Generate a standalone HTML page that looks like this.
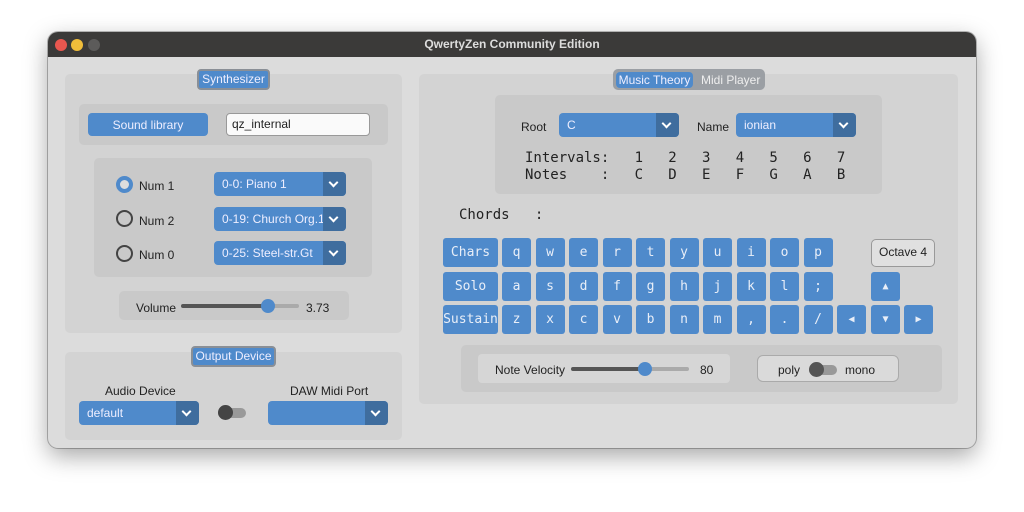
<!DOCTYPE html>
<html><head><style>
*{box-sizing:border-box;margin:0;padding:0}
body{width:1024px;height:512px;background:#fff;position:relative;overflow:hidden;font-family:"Liberation Sans",sans-serif;font-size:12px;color:#222}
.a{position:absolute}
.win{left:48px;top:32px;width:928px;height:416px;border-radius:10px;background:#dcdcdc;box-shadow:0 8px 24px rgba(0,0,0,.35),0 0 0 1px rgba(0,0,0,.25);overflow:hidden}
.tb{left:0;top:0;width:928px;height:25px;background:#3b3a39;color:#ddd;font-weight:bold;font-size:12px;text-align:center;line-height:25px}
.dot{width:12px;height:12px;border-radius:50%;top:7px}
.pan{background:#d3d3d3;border-radius:5px}
.in{background:#c9c9c9;border-radius:5px}
.btn{background:#4f8acb;color:#eef;border-radius:4px;text-align:center}
.tab{background:#4f8acb;color:#eef;border:2px solid #8a8f96;border-radius:4px;text-align:center;font-size:12px;line-height:17px}
.cb{background:#4f8acb;color:#eef;border-radius:4px;font-size:12px;padding-left:8px;line-height:24px;overflow:hidden;white-space:nowrap}
.cb .ar{position:absolute;right:0;top:0;width:23px;height:100%;background:#3f6d9e}
.cb .ar:after{content:"";position:absolute;left:7px;top:7px;width:5px;height:5px;border-right:2px solid #fff;border-bottom:2px solid #fff;transform:rotate(45deg)}
.mono{font-family:"DejaVu Sans Mono","Liberation Mono",monospace;font-size:14px;color:#222}
.k{background:#4f8acb;color:#e8eef8;border-radius:3px;width:29px;height:29px;text-align:center;line-height:29px;font-family:"DejaVu Sans Mono",monospace;font-size:13px}
.rad{width:17px;height:17px;border-radius:50%;border:2.5px solid #444}
.trk{height:4px;background:#999;border-radius:2px}
.thumb{width:14px;height:14px;border-radius:50%;background:#4f8acb}
</style></head><body>
<div class="a win">
 <div class="a tb">QwertyZen Community Edition</div>
 <div class="a dot" style="left:7px;background:#e9574f"></div>
 <div class="a dot" style="left:23px;background:#f0bd3a"></div>
 <div class="a dot" style="left:40px;background:#5c5b5a"></div>

 <div class="a pan" style="left:17px;top:42px;width:337px;height:259px"></div>
 <div class="a tab" style="left:149px;top:37px;width:73px;height:21px">Synthesizer</div>
 <div class="a in" style="left:31px;top:72px;width:309px;height:41px"></div>
 <div class="a btn" style="left:40px;top:81px;width:120px;height:23px;line-height:24px">Sound library</div>
 <div class="a" style="left:178px;top:81px;width:144px;height:23px;background:#fafafa;border:1.5px solid #999;border-radius:4px;padding-left:5px;line-height:21px;font-size:12px">qz_internal</div>
 <div class="a in" style="left:46px;top:126px;width:278px;height:119px"></div>
 <div class="a rad" style="left:68px;top:144px;border:4px solid #4f8acb;background:#ddd"></div>
 <div class="a rad" style="left:68px;top:178px"></div>
 <div class="a rad" style="left:68px;top:213px"></div>
 <div class="a" style="left:91px;top:147px">Num 1</div>
 <div class="a" style="left:91px;top:182px">Num 2</div>
 <div class="a" style="left:91px;top:216px">Num 0</div>
 <div class="a cb" style="left:166px;top:140px;width:132px;height:24px">0-0: Piano 1<div class="ar"></div></div>
 <div class="a cb" style="left:166px;top:175px;width:132px;height:24px">0-19: Church Org.1<div class="ar"></div></div>
 <div class="a cb" style="left:166px;top:209px;width:132px;height:24px">0-25: Steel-str.Gt<div class="ar"></div></div>
 <div class="a in" style="left:71px;top:259px;width:230px;height:29px"></div>
 <div class="a" style="left:88px;top:269px">Volume</div>
 <div class="a trk" style="left:133px;top:272px;width:118px;background:linear-gradient(90deg,#555 75%,#aaa 75%)"></div>
 <div class="a thumb" style="left:213px;top:267px"></div>
 <div class="a" style="left:258px;top:269px">3.73</div>

 <div class="a pan" style="left:17px;top:320px;width:337px;height:88px"></div>
 <div class="a tab" style="left:143px;top:314px;width:85px;height:21px">Output Device</div>
 <div class="a" style="left:57px;top:352px">Audio Device</div>
 <div class="a" style="left:242px;top:352px">DAW Midi Port</div>
 <div class="a cb" style="left:31px;top:369px;width:120px;height:24px">default<div class="ar"></div></div>
 <div class="a" style="left:170px;top:376px;width:28px;height:10px;border-radius:5px;background:#999"></div>
 <div class="a" style="left:170px;top:373px;width:15px;height:15px;border-radius:50%;background:#444"></div>
 <div class="a cb" style="left:220px;top:369px;width:120px;height:24px"><div class="ar"></div></div>

 <div class="a pan" style="left:371px;top:42px;width:539px;height:330px"></div>
 <div class="a" style="left:565px;top:37px;width:152px;height:21px;background:#9b9fa4;border-radius:5px"></div>
 <div class="a btn" style="left:568px;top:40px;width:77px;height:16px;line-height:16px;font-size:12px">Music Theory</div>
 <div class="a" style="left:653px;top:41px;color:#eee;font-size:12px">Midi Player</div>
 <div class="a in" style="left:447px;top:63px;width:387px;height:99px"></div>
 <div class="a" style="left:473px;top:88px">Root</div>
 <div class="a cb" style="left:511px;top:81px;width:120px;height:24px">C<div class="ar"></div></div>
 <div class="a" style="left:649px;top:88px">Name</div>
 <div class="a cb" style="left:688px;top:81px;width:120px;height:24px">ionian<div class="ar"></div></div>
 <pre class="a mono" style="left:477px;top:118px;line-height:17px">Intervals:   1   2   3   4   5   6   7
Notes    :   C   D   E   F   G   A   B</pre>
 <pre class="a mono" style="left:411px;top:175px">Chords   :</pre>

 <div class="a k" style="left:395px;top:206px;width:55px">Chars</div>
 <div class="a k" style="left:395px;top:240px;width:55px">Solo</div>
 <div class="a k" style="left:395px;top:273px;width:55px">Sustain</div>
 <div id="keys"></div>
 <div class="a" style="left:823px;top:207px;width:64px;height:28px;border:1.5px solid #999;border-radius:5px;background:#e0e0e0;text-align:center;line-height:25px">Octave 4</div>
 <div class="a k" style="left:823px;top:240px;font-size:10px">▲</div>
 <div class="a k" style="left:789px;top:273px;font-size:10px">◀</div>
 <div class="a k" style="left:823px;top:273px;font-size:10px">▼</div>
 <div class="a k" style="left:856px;top:273px;font-size:10px">▶</div>

 <div class="a in" style="left:413px;top:313px;width:481px;height:47px"></div>
 <div class="a" style="left:430px;top:322px;width:252px;height:29px;background:#d6d6d6;border-radius:4px"></div>
 <div class="a" style="left:447px;top:331px">Note Velocity</div>
 <div class="a trk" style="left:523px;top:335px;width:118px;background:linear-gradient(90deg,#555 62%,#aaa 62%)"></div>
 <div class="a thumb" style="left:590px;top:330px"></div>
 <div class="a" style="left:652px;top:331px">80</div>
 <div class="a" style="left:709px;top:323px;width:142px;height:27px;border:1.5px solid #aaa;border-radius:6px;background:#dadada"></div>
 <div class="a" style="left:730px;top:331px">poly</div>
 <div class="a" style="left:761px;top:333px;width:28px;height:10px;border-radius:5px;background:#999"></div>
 <div class="a" style="left:761px;top:330px;width:15px;height:15px;border-radius:50%;background:#555"></div>
 <div class="a" style="left:797px;top:331px">mono</div>
</div>
<script>
var rows=[["q","w","e","r","t","y","u","i","o","p"],["a","s","d","f","g","h","j","k","l",";"],["z","x","c","v","b","n","m",",",".","/"]];
var tops=[206,240,273],h="";
rows.forEach(function(r,i){r.forEach(function(c,j){h+='<div class="a k" style="left:'+(454+j*33.5)+'px;top:'+tops[i]+'px">'+c+'</div>';});});
document.getElementById("keys").outerHTML=h;
</script>
</body></html>
